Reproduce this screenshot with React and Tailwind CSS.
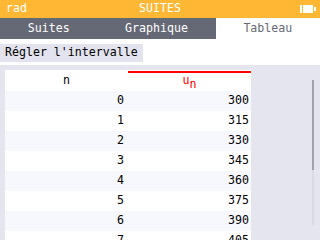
import React from "react";

const rows = [
  [0, 300],
  [1, 315],
  [2, 330],
  [3, 345],
  [4, 360],
  [5, 375],
  [6, 390],
  [7, 405],
];

function Battery() {
  return (
    <svg width="16" height="9" viewBox="0 0 16 9" className="block">
      <rect x="0" y="0" width="2" height="8" fill="white" />
      <rect x="3" y="0" width="10" height="8" fill="white" />
      <rect x="14" y="2" width="2" height="4" fill="white" />
    </svg>
  );
}

export default function App() {
  return (
    <div
      className="w-[320px] h-[240px] overflow-hidden bg-white flex flex-col text-[11.6px] leading-none"
      style={{ fontFamily: '"DejaVu Sans Mono", "Liberation Mono", monospace' }}
    >
      <div className="h-[18px] bg-[#ffb734] text-white flex items-center relative shrink-0">
        <span className="pl-[6px]">rad</span>
        <span className="absolute left-0 right-0 text-center">SUITES</span>
        <div className="ml-auto mr-[4px]">
          <Battery />
        </div>
      </div>
      <div className="h-[21px] bg-[#656975] flex shrink-0">
        <div className="flex-auto flex items-center justify-center text-white">Suites</div>
        <div className="flex-auto flex items-center justify-center text-white">Graphique</div>
        <div className="flex-auto flex items-center justify-center bg-white text-[#656975]">Tableau</div>
      </div>
      <div className="h-[26px] bg-white shrink-0 pt-[5px]">
        <div className="w-[143px] h-[18px] bg-[#e2e3ee] text-black flex items-center pl-[5px]">
          Régler l'intervalle
        </div>
      </div>
      <div className="flex-1 bg-[#e4e5ee] flex pl-[5px] pt-[5px] relative">
        <div className="w-[246px] flex flex-col">
          <div className="h-[21px] bg-white flex shrink-0">
            <div className="w-[123px] flex items-center justify-center text-black">n</div>
            <div className="w-[123px] mt-[1px] border-t-2 border-[#ff0000] flex items-center justify-center text-[#ff0000]">
              <span className="relative top-[-1px]">u</span>
              <span className="relative top-[3px]">n</span>
            </div>
          </div>
          {rows.map(([n, u], i) => (
            <div
              key={n}
              className={`h-[20px] flex shrink-0 text-black ${i % 2 === 0 ? "bg-[#f6f8fd]" : "bg-white"}`}
            >
              <div className="w-[123px] flex items-center justify-end pr-[4px]">{n}</div>
              <div className="w-[123px] flex items-center justify-end pr-[2px]">{u}</div>
            </div>
          ))}
        </div>
        <div className="absolute left-[312px] top-[15px] w-[2px] h-[145px] bg-[#d9d9de]">
          <div className="w-[2px] h-[90px] bg-[#a3a3a6]" />
        </div>
      </div>
    </div>
  );
}
